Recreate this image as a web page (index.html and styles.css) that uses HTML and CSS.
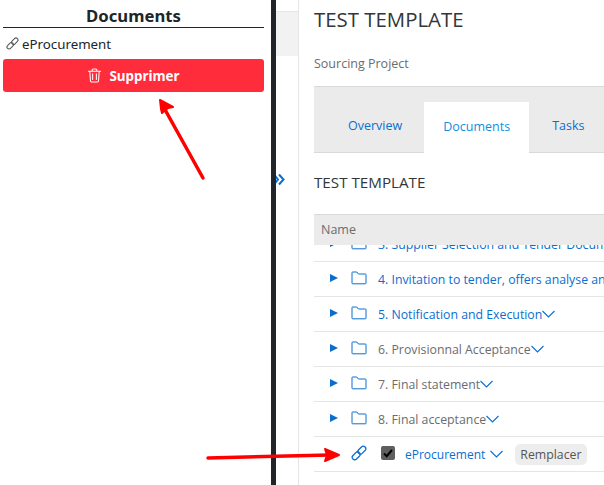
FILE: index.html
```html
<!DOCTYPE html>
<html lang="en">
<head>
  <meta charset="UTF-8" />
  <title>Test Template</title>
  <link rel="stylesheet" href="styles.css">
</head>
<body>
  <svg width="0" height="0" class="defs">
    <symbol id="folder" viewBox="0 0 16 14">
      <path d="M1 12.200V1.600c0-.4.2-.6.6-.6h4.200l1.600 2h7c.4 0 .6.2.6.6v8.600c0 .4-.2.6-.6.6H1.600c-.4 0-.6-.2-.6-.6z" fill="none" stroke="currentColor" stroke-width="1"/>
    </symbol>
    <symbol id="chevron" viewBox="0 0 13 8">
      <path d="M.5 1l6 6 6-6" fill="none" stroke="currentColor" stroke-width="1.100"/>
    </symbol>
    <symbol id="link" viewBox="0 0 16 16">
      <g transform="rotate(-45 8 8)" fill="none" stroke="currentColor" stroke-width="1.300">
        <rect x="-.5" y="5.500" width="9" height="5" rx="2.500"/>
        <rect x="7.500" y="5.500" width="9" height="5" rx="2.500"/>
      </g>
    </symbol>
  </svg>

  <aside class="side">
    <h2 class="side-title">Documents</h2>
    <div class="side-file">
      <svg class="side-link"><use href="#link"/></svg>
      <span>eProcurement</span>
    </div>
    <button class="delete">
      <svg class="trash" viewBox="0 0 16 16"><path d="M1.500 3.500h13M5.500 3.300V2.200c0-.7.4-1.100 1.100-1.100h2.800c.7 0 1.100.4 1.100 1.100v1.100M3 3.500l.7 10.200c0 .8.5 1.200 1.200 1.200h6.200c.7 0 1.200-.4 1.200-1.200L13 3.500M6 6.200v6M10 6.200v6" fill="none" stroke="currentColor" stroke-width="1.100" stroke-linecap="round"/></svg>
      Supprimer
    </button>
  </aside>

  <div class="divider"></div>

  <div class="strip">
    <div class="strip-top"></div>
    <svg class="expand" viewBox="0 0 10 13"><path d="M-2 1.500L2 6.500-2 11.500M3 1.500L7.500 6.500 3 11.500" fill="none" stroke="currentColor" stroke-width="2"/></svg>
  </div>

  <main class="main">
    <h1 class="title">TEST TEMPLATE</h1>
    <p class="subtitle">Sourcing Project</p>
    <div class="tabs">
      <a class="tab">Overview</a>
      <a class="tab active">Documents</a>
      <a class="tab">Tasks</a>
    </div>
    <h2 class="section">TEST TEMPLATE</h2>
    <div class="table-head">Name</div>
    <div class="table-body">
      <div class="rows">
        <div class="row">
          <span class="caret"></span>
          <svg class="folder"><use href="#folder"/></svg>
          <span class="name link">3. Supplier Selection and Tender Documents</span>
        </div>
        <div class="row">
          <span class="caret"></span>
          <svg class="folder"><use href="#folder"/></svg>
          <span class="name link">4. Invitation to tender, offers analyse and award</span>
        </div>
        <div class="row">
          <span class="caret"></span>
          <svg class="folder"><use href="#folder"/></svg>
          <span class="name link">5. Notification and Execution</span>
          <svg class="chevron"><use href="#chevron"/></svg>
        </div>
        <div class="row">
          <span class="caret"></span>
          <svg class="folder"><use href="#folder"/></svg>
          <span class="name">6. Provisionnal Acceptance</span>
          <svg class="chevron"><use href="#chevron"/></svg>
        </div>
        <div class="row">
          <span class="caret"></span>
          <svg class="folder"><use href="#folder"/></svg>
          <span class="name">7. Final statement</span>
          <svg class="chevron"><use href="#chevron"/></svg>
        </div>
        <div class="row">
          <span class="caret"></span>
          <svg class="folder"><use href="#folder"/></svg>
          <span class="name">8. Final acceptance</span>
          <svg class="chevron"><use href="#chevron"/></svg>
        </div>
        <div class="row">
          <svg class="row-link"><use href="#link"/></svg>
          <span class="check">
            <svg viewBox="0 0 14 14"><path d="M3 7.500l2.700 2.700L11 4" fill="none" stroke="#000" stroke-width="2"/></svg>
          </span>
          <span class="name link file">eProcurement</span>
          <svg class="chevron file-chevron"><use href="#chevron"/></svg>
          <span class="replace">Remplacer</span>
        </div>
      </div>
    </div>
  </main>

  <svg class="arrows" viewBox="0 0 604 485">
    <path d="M203 178L163 106" stroke="#f00" stroke-width="3.500" stroke-linecap="round" fill="none"/>
    <path d="M160 100l13 7-5 1-6 5-1-4z" fill="#f00" stroke="#f00" stroke-width="2" stroke-linejoin="round"/>
    <path d="M208 458L330 455" stroke="#f00" stroke-width="3.500" stroke-linecap="round" fill="none"/>
    <path d="M339 455l-14-6 2 6-2 6z" fill="#f00" stroke="#f00" stroke-width="2" stroke-linejoin="round"/>
  </svg>
</body>
</html>
```
FILE: styles.css
```css
* {
  box-sizing: border-box;
}
html, body {
  height: 100%;
}
body {
  margin: 0;
  display: flex;
  height: 485px;
  overflow: hidden;
  background: white;
  font-family: 'Noto Sans', sans-serif;
  color: #32363a;
}
.defs {
  position: absolute;
}

/* left panel */
.side {
  width: 271px;
  flex: none;
  padding: 0 7px 0 3px;
}
.side-title {
  margin: 0;
  height: 28px;
  line-height: 32px;
  border-bottom: 1px solid #212529;
  text-align: center;
  font-size: 16.700px;
  font-weight: 700;
  color: #212529;
}
.side-file {
  display: flex;
  align-items: center;
  height: 31px;
  padding-left: 3px;
  font-size: 13.300px;
  color: #212529;
}
.side-link {
  width: 13px;
  height: 13px;
  margin-right: 3px;
  color: #555;
}
.delete {
  display: flex;
  align-items: center;
  justify-content: center;
  width: 100%;
  height: 33px;
  padding: 0;
  border: none;
  border-radius: 3px;
  background: #ff2d3b;
  color: white;
  font-family: inherit;
  font-size: 13.400px;
  font-weight: 700;
}
.trash {
  width: 15px;
  height: 15px;
  margin-right: 7px;
}

.divider {
  width: 5px;
  flex: none;
  background: #212529;
}
.strip {
  width: 23px;
  flex: none;
  padding-top: 11px;
  border-right: 1px solid #e5e5e5;
}
.strip-top {
  height: 45px;
  background: #f2f2f2;
  border-top: 1px solid #e5e5e5;
}
.expand {
  display: block;
  width: 10px;
  height: 13px;
  margin-top: 117px;
  color: #0a6ed1;
}

/* main */
.main {
  flex: 1;
  min-width: 0;
  padding: 7px 0 0 15px;
  font-family: 'Open Sans', sans-serif;
}
.title {
  margin: 0;
  font-size: 20.400px;
  line-height: 24px;
  font-weight: 400;
  color: #32363a;
}
.subtitle {
  margin: 24px 0 0;
  font-size: 12.500px;
  line-height: 17px;
  color: #6a6d70;
}
.tabs {
  display: flex;
  align-items: flex-end;
  height: 67px;
  margin-top: 14px;
  padding-left: 11px;
  background: #ebebeb;
  border-top: 1px solid #d9d9d9;
  border-bottom: 1px solid #d9d9d9;
}
.tab {
  display: flex;
  flex: none;
  align-items: center;
  justify-content: center;
  height: 51px;
  padding: 0 22px 2px 23px;
  font-size: 12.500px;
  color: #0a6ed1;
}
.tab.active {
  width: 105px;
  padding: 0 0 2px;
  margin-bottom: -1px;
  background: white;
  color: #0e90e0;
}
.section {
  margin: 20px 0 0;
  font-size: 15.200px;
  line-height: 19px;
  font-weight: 400;
  color: #32363a;
}
.table-head {
  height: 31px;
  margin-top: 22px;
  padding-left: 7px;
  line-height: 30px;
  font-size: 12.500px;
  color: #6a6d70;
  background: #ebebeb;
  border-top: 1px solid #d9d9d9;
}
.table-body {
  height: 227px;
  overflow: hidden;
}
.rows {
  margin-top: -18px;
}
.row {
  display: flex;
  align-items: center;
  height: 35px;
  padding-left: 16px;
  border-bottom: 1px solid #e5e5e5;
  white-space: nowrap;
  font-size: 12.300px;
}
.caret {
  flex: none;
  width: 0;
  height: 0;
  border-left: 8px solid #0a6ed1;
  border-top: 4.500px solid transparent;
  border-bottom: 4.500px solid transparent;
  margin-right: 13px;
  margin-bottom: 2px;
}
.folder {
  flex: none;
  width: 16px;
  height: 14px;
  margin-right: 11px;
  margin-bottom: 3px;
  color: #0a6ed1;
}
.name {
  color: #6a6d70;
}
.name.link {
  color: #0a6ed1;
}
.chevron {
  flex: none;
  width: 13px;
  height: 8px;
  color: #0a6ed1;
}
.row-link {
  flex: none;
  width: 16px;
  height: 16px;
  margin: 0 14px 2px 21px;
  color: #0a6ed1;
}
.check {
  display: flex;
  flex: none;
  width: 14px;
  height: 14px;
  margin-right: 10px;
  margin-bottom: 3px;
  border-radius: 2px;
  background: #5f5f5f;
}
.file {
  font-size: 12px;
}
.file-chevron {
  margin-left: 5px;
}
.replace {
  margin-left: 12px;
  padding: 0 5px;
  height: 21px;
  line-height: 21px;
  border-radius: 5px;
  background: #ededed;
  color: #555;
}

.arrows {
  position: absolute;
  top: 0;
  left: 0;
  width: 604px;
  height: 485px;
  pointer-events: none;
}
```
